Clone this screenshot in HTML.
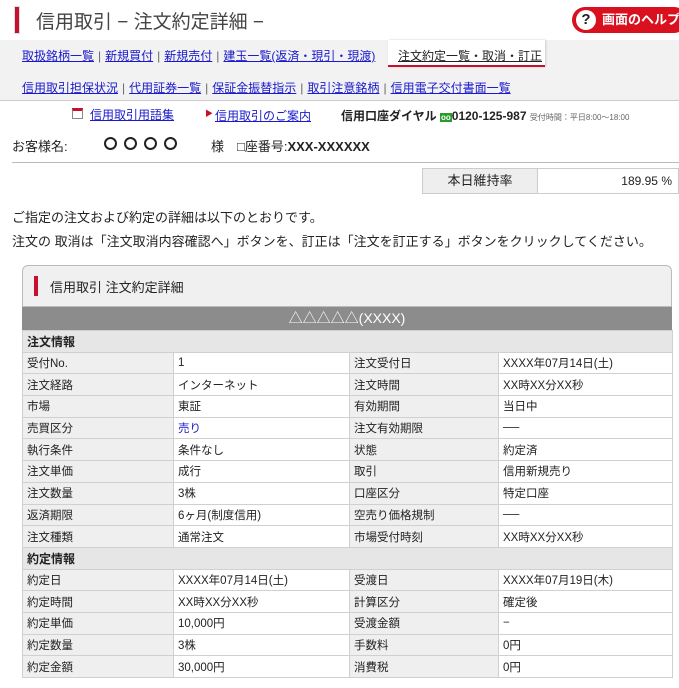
<!DOCTYPE html>
<html><head><meta charset="utf-8"><style>
*{box-sizing:border-box;margin:0;padding:0}
body{width:679px;height:688px;overflow:hidden;background:#fff;font-family:"Liberation Sans","Noto Sans CJK JP",sans-serif;color:#222;position:relative;font-size:12px}
.a{position:absolute;white-space:nowrap}
a{color:#1a1acc;text-decoration:underline}
.nav a{color:#1a1acc}
.sep{color:#666;margin:0 4px}
.c{display:inline-block;width:13px;height:13px;border:2.5px solid #222;border-radius:50%;margin-right:7px;vertical-align:-2px}
table{position:absolute;left:22px;top:330px;width:650px;border-collapse:collapse;table-layout:fixed}
td{border:1px solid #d0d0d0;height:21.7px;padding:0 4px;font-size:11.5px;white-space:nowrap;overflow:hidden}
td.l{background:#efefef}
td.h{background:#e6e6e6;font-weight:bold;font-size:12px}
</style></head><body>
<div class="a" style="left:14px;top:6px;width:6px;height:28px;background:#c8102e;border:1px solid #ddd"></div>
<div class="a" style="left:36px;top:7px;font-size:19px;color:#444">信用取引 − 注文約定詳細 −</div>
<div class="a" style="left:572px;top:7px;width:115px;height:26px;background:#d9101e;border-radius:13px;color:#fff;font-weight:bold;font-size:13px;line-height:26px;padding-left:30px">画面のヘルプ</div>
<div class="a" style="left:576px;top:10px;width:20px;height:20px;background:#fff;border-radius:50%;color:#222;font-weight:bold;font-size:15px;line-height:20px;text-align:center">?</div>
<div class="a" style="left:0;top:40px;width:679px;height:61px;background:#f2f2f2;border-bottom:1px solid #ccc"></div>
<div class="a" style="left:388px;top:40px;width:157px;height:27px;background:#fff;border-bottom:2px solid #c8102e;box-shadow:1px 0 2px #ccc"></div>
<div class="a nav" style="left:22px;top:47px;font-size:12px"><a>取扱銘柄一覧</a><span class="sep">|</span><a>新規買付</a><span class="sep">|</span><a>新規売付</a><span class="sep">|</span><a>建玉一覧(返済・現引・現渡)</a></div>
<div class="a" style="left:398px;top:47px;font-size:12px;color:#222;text-decoration:underline">注文約定一覧・取消・訂正</div>
<div class="a nav" style="left:22px;top:79px;font-size:12px"><a>信用取引担保状況</a><span class="sep">|</span><a>代用証券一覧</a><span class="sep">|</span><a>保証金振替指示</a><span class="sep">|</span><a>取引注意銘柄</a><span class="sep">|</span><a>信用電子交付書面一覧</a></div>
<div class="a" style="left:72px;top:108px;width:11px;height:11px;border:1px solid #888;border-top:3px solid #c8102e;background:#fff"></div>
<div class="a" style="left:90px;top:106px;font-size:12px"><a>信用取引用語集</a></div>
<div class="a" style="left:205px;top:108px;color:#c8102e;font-size:8px">▶</div>
<div class="a" style="left:215px;top:107px;font-size:12px"><a>信用取引のご案内</a></div>
<div class="a" style="left:341px;top:107px;font-size:12px;font-weight:bold">信用口座ダイヤル <span style="background:#2a9a2a;color:#fff;font-size:8px;padding:0 1px">oo</span>0120-125-987 <span style="font-size:8px;font-weight:normal;color:#666">受付時間：平日8:00～18:00</span></div>
<div class="a" style="left:12px;top:136px;font-size:13px">お客様名:</div>
<div class="a" style="left:104px;top:136px;font-size:13px"><span class="c"></span><span class="c"></span><span class="c"></span><span class="c"></span></div>
<div class="a" style="left:211px;top:136px;font-size:13px">様　□座番号:<b>XXX-XXXXXX</b></div>
<div class="a" style="left:12px;top:162px;width:667px;height:1px;background:#bbb"></div>
<div class="a" style="left:422px;top:168px;width:116px;height:26px;background:#eee;border:1px solid #ccc;text-align:center;line-height:24px;font-size:13px">本日維持率</div>
<div class="a" style="left:537px;top:168px;width:142px;height:26px;border:1px solid #ccc;text-align:right;line-height:24px;font-size:12px;padding-right:6px">189.95 %</div>
<div class="a" style="left:12px;top:207px;font-size:13px">ご指定の注文および約定の詳細は以下のとおりです。</div>
<div class="a" style="left:12px;top:231px;font-size:13px">注文の 取消は「注文取消内容確認へ」ボタンを、訂正は「注文を訂正する」ボタンをクリックしてください。</div>
<div class="a" style="left:22px;top:265px;width:650px;height:42px;background:#f0f0f0;border:1px solid #bbb;border-radius:6px 6px 0 0"></div>
<div class="a" style="left:34px;top:276px;width:4px;height:20px;background:#c8102e"></div>
<div class="a" style="left:50px;top:277px;font-size:13px">信用取引 注文約定詳細</div>
<div class="a" style="left:22px;top:307px;width:650px;height:23px;background:#8c8c8c;color:#fff;text-align:center;font-size:14px;line-height:23px">△△△△△(XXXX)</div>
<table>
<colgroup><col style="width:151px"><col style="width:176px"><col style="width:149px"><col style="width:174px"></colgroup>
<tr><td class="h" colspan="4">注文情報</td></tr>
<tr><td class="l">受付No.</td><td>1</td><td class="l">注文受付日</td><td>XXXX年07月14日(土)</td></tr>
<tr><td class="l">注文経路</td><td>インターネット</td><td class="l">注文時間</td><td>XX時XX分XX秒</td></tr>
<tr><td class="l">市場</td><td>東証</td><td class="l">有効期間</td><td>当日中</td></tr>
<tr><td class="l">売買区分</td><td style="color:#1a1acc">売り</td><td class="l">注文有効期限</td><td>──</td></tr>
<tr><td class="l">執行条件</td><td>条件なし</td><td class="l">状態</td><td>約定済</td></tr>
<tr><td class="l">注文単価</td><td>成行</td><td class="l">取引</td><td>信用新規売り</td></tr>
<tr><td class="l">注文数量</td><td>3株</td><td class="l">口座区分</td><td>特定口座</td></tr>
<tr><td class="l">返済期限</td><td>6ヶ月(制度信用)</td><td class="l">空売り価格規制</td><td>──</td></tr>
<tr><td class="l">注文種類</td><td>通常注文</td><td class="l">市場受付時刻</td><td>XX時XX分XX秒</td></tr>
<tr><td class="h" colspan="4">約定情報</td></tr>
<tr><td class="l">約定日</td><td>XXXX年07月14日(土)</td><td class="l">受渡日</td><td>XXXX年07月19日(木)</td></tr>
<tr><td class="l">約定時間</td><td>XX時XX分XX秒</td><td class="l">計算区分</td><td>確定後</td></tr>
<tr><td class="l">約定単価</td><td>10,000円</td><td class="l">受渡金額</td><td>−</td></tr>
<tr><td class="l">約定数量</td><td>3株</td><td class="l">手数料</td><td>0円</td></tr>
<tr><td class="l">約定金額</td><td>30,000円</td><td class="l">消費税</td><td>0円</td></tr>
</table>
</body></html>
